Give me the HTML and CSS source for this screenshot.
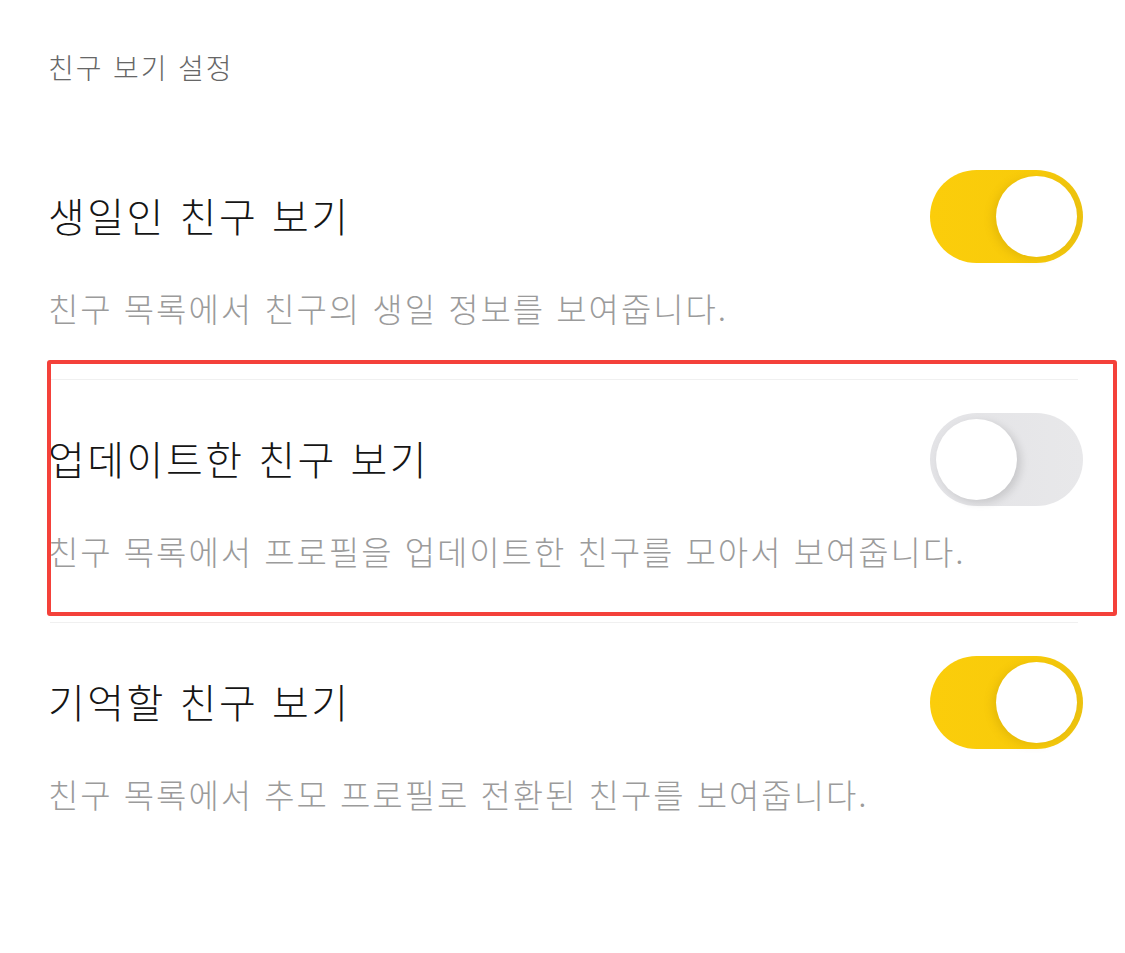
FILE: index.html
```html
<!DOCTYPE html>
<html lang="ko">
<head>
<meta charset="utf-8">
<link rel="stylesheet" href="styles.css">
</head>
<body>
<div class="page">
  <div class="section-title">친구 보기 설정</div>
  <div class="item">
    <div class="row">
      <div class="title">생일인 친구 보기</div>
      <div class="toggle on"><span class="knob"></span></div>
    </div>
    <div class="desc">친구 목록에서 친구의 생일 정보를 보여줍니다.</div>
  </div>
  <div class="item highlighted">
    <div class="row">
      <div class="title">업데이트한 친구 보기</div>
      <div class="toggle off"><span class="knob"></span></div>
    </div>
    <div class="desc">친구 목록에서 프로필을 업데이트한 친구를 모아서 보여줍니다.</div>
    <div class="mark"></div>
  </div>
  <div class="item last">
    <div class="row">
      <div class="title">기억할 친구 보기</div>
      <div class="toggle on"><span class="knob"></span></div>
    </div>
    <div class="desc">친구 목록에서 추모 프로필로 전환된 친구를 보여줍니다.</div>
  </div>
</div>
</body>
</html>
```
FILE: styles.css
```css
html, body {
  margin: 0;
  padding: 0;
  background: #ffffff;
}
body {
  font-family: "Noto Sans CJK KR", "Noto Sans", sans-serif;
  font-weight: 300;
  width: 1125px;
  height: 953px;
  overflow: hidden;
}
.page {
  display: flex;
  flex-direction: column;
}
.section-title {
  padding: 47px 48px 50px;
  font-size: 28px;
  line-height: 40px;
  letter-spacing: 1.9px;
  color: #666666;
}
.item {
  position: relative;
  padding: 33px 42px 50px 48px;
}
.item::after {
  content: "";
  position: absolute;
  left: 50px;
  right: 47px;
  bottom: 0;
  height: 1px;
  background: #f0f0f0;
}
.item.last::after {
  display: none;
}
.row {
  display: flex;
  align-items: center;
  justify-content: space-between;
  height: 92px;
}
.title {
  font-size: 40px;
  color: #151515;
  line-height: 56px;
  letter-spacing: 2.5px;
  margin-top: -3px;
}
.desc {
  margin-top: 24px;
  font-size: 33px;
  line-height: 44px;
  letter-spacing: 1.95px;
  color: #9b9b9b;
  white-space: nowrap;
}
.toggle {
  position: relative;
  width: 153px;
  height: 93px;
  border-radius: 47px;
  box-sizing: border-box;
}
.toggle .knob {
  position: absolute;
  top: 6px;
  width: 81px;
  height: 81px;
  border-radius: 50%;
  background: #ffffff;
}
.toggle.on {
  background: linear-gradient(90deg, #fbcd0b 0%, #f8cb0a 70%, #ecc20f 100%);
}
.toggle.on .knob {
  right: 6px;
  box-shadow: -4px 2px 8px rgba(150, 110, 0, 0.18);
}
.toggle.off {
  background: linear-gradient(90deg, #e3e3e6 0%, #e8e8ea 100%);
}
.toggle.off .knob {
  left: 6px;
  box-shadow: 4px 3px 9px rgba(0, 0, 0, 0.13);
}
.mark {
  position: absolute;
  left: 47px;
  top: -20px;
  width: 1070px;
  height: 256px;
  box-sizing: border-box;
  border: 4px solid #f4413a;
  border-radius: 3px;
  pointer-events: none;
}
```
